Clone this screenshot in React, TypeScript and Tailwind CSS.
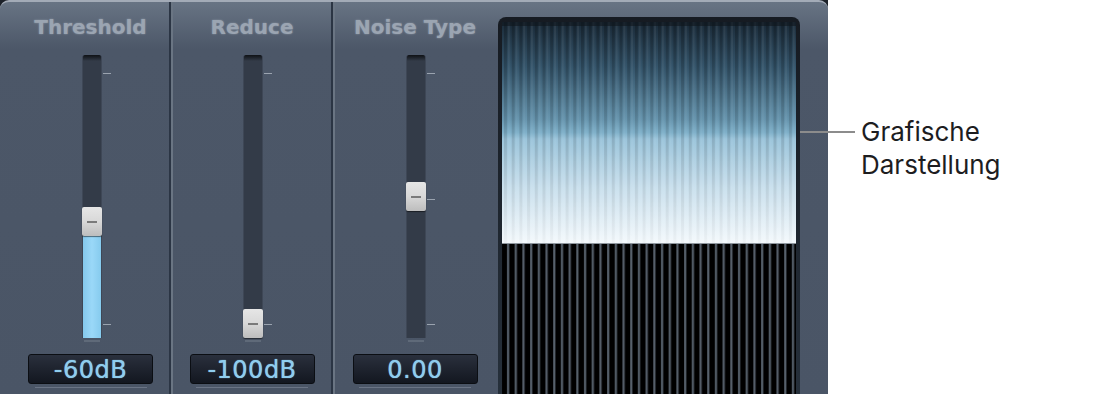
import React from 'react';

type Fader = {
    label: string;
    value: string;
    thumbTop: number;
    fill?: boolean;
    midTick?: boolean;
    width: string;
};

const faders: Fader[] = [
    { label: 'Threshold', value: '-60dB', thumbTop: 152, fill: true, width: 'w-[157px]' },
    { label: 'Reduce', value: '-100dB', thumbTop: 254, width: 'w-[158px]' },
    { label: 'Noise Type', value: '0.00', thumbTop: 127, midTick: true, width: 'w-[160px]' },
];

const Divider = () => (
    <div className="flex h-full w-[4px] shrink-0">
        <div className="w-[2px] bg-[#2b3544]" />
        <div className="w-[2px] bg-[#6a7583]" />
    </div>
);

const FaderColumn = ({ f }: { f: Fader }) => {
    return (
        <div className={`${f.width} flex shrink-0 flex-col items-center`}>
            <div
                className="flex h-[50px] items-center text-[20px] font-bold text-[#9ba5b2] [text-shadow:0_0_2px_#8d97a5]"
                style={{ fontFamily: '"DejaVu Sans", sans-serif' }}
            >
                {f.label}
            </div>

            {/* fader track */}
            <div className="relative mt-[3px] ml-[2px] h-[283px] w-[20px]">
                <div className="absolute inset-0 overflow-hidden rounded-t-[3px] border-x border-[#3e4756] bg-[#333b48]">
                    <div className="h-[6px] bg-gradient-to-b from-[#0f1216] to-[#333b48]" />
                    {f.fill && (
                        <div
                            className="absolute inset-x-0 bottom-0 bg-gradient-to-r from-[#84c8ec] via-[#9ad8f8] to-[#86cbee]"
                            style={{ top: f.thumbTop + 29 }}
                        />
                    )}
                </div>
                <div
                    className="absolute inset-x-0 flex h-[29px] items-center justify-center rounded-[2px] bg-gradient-to-b from-[#e6e6e6] via-[#d8d8d8] to-[#bdbdbd] shadow-[0_1px_1px_rgba(0,0,0,0.5)]"
                    style={{ top: f.thumbTop }}
                >
                    <div className="h-[2px] w-[10px] bg-[#7a7a7a]" />
                </div>
                <div className="absolute top-[18px] left-[21px] h-[1px] w-[8px] bg-[#9aa3af]" />
                {f.midTick && <div className="absolute top-[144px] left-[21px] h-[1px] w-[8px] bg-[#9aa3af]" />}
                <div className="absolute top-[269px] left-[21px] h-[1px] w-[8px] bg-[#9aa3af]" />
            </div>
            <div className="mt-[2px] ml-[2px] h-[2px] w-[16px] bg-[#5f6a79]" />

            {/* value box */}
            <div
                className="mt-[12px] flex h-[30px] w-[125px] items-center justify-center rounded-[3px] border border-[#0b0e13] bg-gradient-to-b from-[#2a303d] to-[#131720] pt-[1px] text-[24px] tracking-[0.5px] text-[#8fcdee] [text-shadow:0_0_1px_#8fcdee]"
                style={{ fontFamily: '"DejaVu Sans", sans-serif' }}
            >
                {f.value}
            </div>
            <div className="mt-[3px] h-[1px] w-[112px] bg-[#6a7485]" />
        </div>
    );
};

const Display = () => {
    const w = 294;
    const split = 221;
    const h = 374;
    return (
        <div className="mt-[15px] ml-[3px] h-[379px] w-[302px] shrink-0 rounded-t-[8px] bg-gradient-to-b from-[#161b22] to-[#26303b] px-[4px] pt-[5px]">
            <svg width={w} height={h} viewBox={`0 0 ${w} ${h}`} className="block">
                <defs>
                    <linearGradient id="sky" x1="0" y1="0" x2="0" y2="1">
                        <stop offset="0" stopColor="#1b2b39" />
                        <stop offset="0.2" stopColor="#34546a" />
                        <stop offset="0.44" stopColor="#6795ae" />
                        <stop offset="0.5" stopColor="#7fb0c9" />
                        <stop offset="0.53" stopColor="#9cc5db" />
                        <stop offset="0.75" stopColor="#cbe1ee" />
                        <stop offset="1" stopColor="#f4f9fc" />
                    </linearGradient>
                    <linearGradient id="fade" x1="0" y1="0" x2="0" y2="1">
                        <stop offset="0" stopColor="#ffffff" stopOpacity="1" />
                        <stop offset="0.5" stopColor="#ffffff" stopOpacity="0.55" />
                        <stop offset="1" stopColor="#ffffff" stopOpacity="0.12" />
                    </linearGradient>
                    <mask id="barMask">
                        <rect x="0" y="0" width={w} height={split} fill="url(#fade)" />
                    </mask>
                    <pattern id="bars" x="2" y="0" width="7.7" height="10" patternUnits="userSpaceOnUse">
                        <rect x="0" y="0" width="3" height="10" fill="#000" opacity="0.22" />
                        <rect x="4" y="0" width="1.6" height="10" fill="#fff" opacity="0.08" />
                    </pattern>
                    <pattern id="lines" x="2" y="0" width="7.7" height="10" patternUnits="userSpaceOnUse">
                        <rect x="3" y="0" width="2.2" height="10" fill="#56606b" />
                    </pattern>
                </defs>
                <rect x="0" y="0" width={w} height={split} fill="url(#sky)" />
                <rect x="0" y="0" width={w} height={split} fill="url(#bars)" mask="url(#barMask)" />
                <rect x="0" y="0" width={w} height="4" fill="#0f161d" opacity="0.6" />
                <rect x="0" y={split} width={w} height={h - split} fill="#000" />
                <rect x="0" y={split} width={w} height={h - split} fill="url(#lines)" />
                <rect x="0" y={split} width={w} height="1" fill="#8e969e" />
            </svg>
        </div>
    );
};

export default function App() {
    return (
        <div className="relative h-[394px] w-[1109px] overflow-hidden bg-white">
            <div className="h-[394px] w-[828px] bg-[#1c2129]">
                <div className="flex h-[394px] w-[828px] rounded-t-[9px] border-t-2 border-[#a3abb7] bg-gradient-to-b from-[#687484] via-[#4c5768] via-[12%] to-[#4a5566] pl-[12px]">
                    <FaderColumn f={faders[0]} />
                    <Divider />
                    <FaderColumn f={faders[1]} />
                    <Divider />
                    <FaderColumn f={faders[2]} />
                    <Display />
                </div>
            </div>

            {/* callout */}
            <div className="absolute top-[131px] left-[800px] h-[2px] w-[55px] bg-[#8c8c8c]" />
            <div
                className="absolute top-[115px] left-[861px] text-[26px] leading-[33px] text-[#1d1d1f]"
                style={{ fontFamily: 'Inter, sans-serif' }}
            >
                Grafische
                <br />
                Darstellung
            </div>
        </div>
    );
}
